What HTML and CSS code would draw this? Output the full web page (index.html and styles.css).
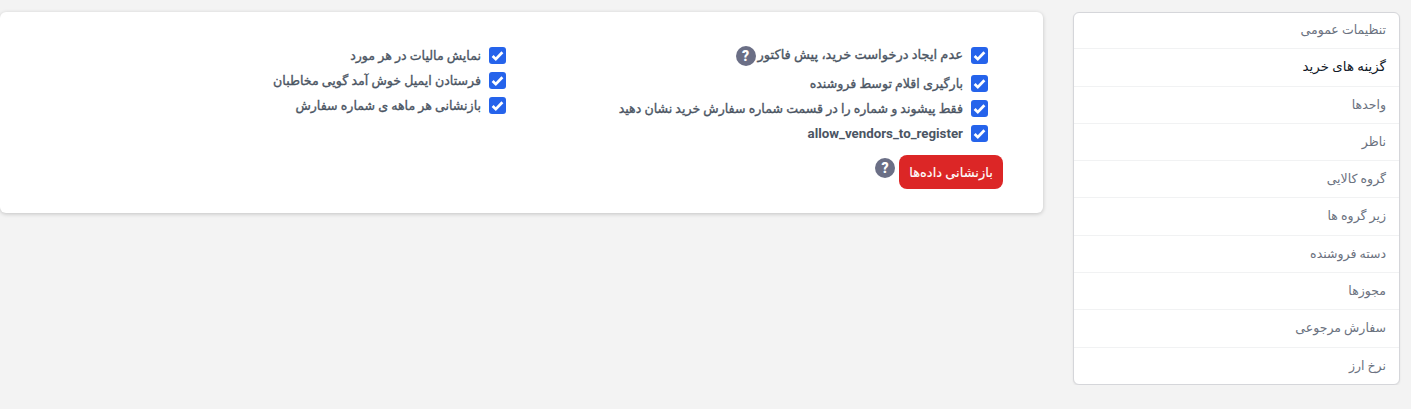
FILE: index.html
```html
<!DOCTYPE html>
<html lang="fa" dir="rtl">
<head>
<meta charset="UTF-8">
<meta name="viewport" content="width=device-width, initial-scale=1.0">
<title>تنظیمات</title>
<link rel="stylesheet" href="styles.css">
</head>
<body>

<div class="page">

  <!-- Settings menu -->
  <nav class="side-menu">
    <a class="menu-item">تنظیمات عمومی</a>
    <a class="menu-item active">گزینه های خرید</a>
    <a class="menu-item">واحدها</a>
    <a class="menu-item">ناظر</a>
    <a class="menu-item">گروه کالایی</a>
    <a class="menu-item">زیر گروه ها</a>
    <a class="menu-item">دسته فروشنده</a>
    <a class="menu-item">مجوزها</a>
    <a class="menu-item">سفارش مرجوعی</a>
    <a class="menu-item">نرخ ارز</a>
  </nav>

  <!-- Purchase options -->
  <main class="card">
    <div class="options">
      <div class="option-col">
        <label class="option option-help">
          <span class="check"><svg viewBox="0 0 16 16"><path d="M3.4 8.4l3 3 6.2-6.4"/></svg></span>
          <span class="option-text">عدم ایجاد درخواست خرید، پیش فاکتور</span>
          <span class="help help-overlap">?</span>
        </label>
        <label class="option">
          <span class="check"><svg viewBox="0 0 16 16"><path d="M3.4 8.4l3 3 6.2-6.4"/></svg></span>
          <span class="option-text">بارگیری اقلام توسط فروشنده</span>
        </label>
        <label class="option">
          <span class="check"><svg viewBox="0 0 16 16"><path d="M3.4 8.4l3 3 6.2-6.4"/></svg></span>
          <span class="option-text">فقط پیشوند و شماره را در قسمت شماره سفارش خرید نشان دهید</span>
        </label>
        <label class="option">
          <span class="check"><svg viewBox="0 0 16 16"><path d="M3.4 8.4l3 3 6.2-6.4"/></svg></span>
          <span class="option-latin">allow_vendors_to_register</span>
        </label>
        <div class="reset-row">
          <button class="reset-button">بازنشانی داده‌ها</button>
          <span class="help">?</span>
        </div>
      </div>
      <div class="option-col">
        <label class="option">
          <span class="check"><svg viewBox="0 0 16 16"><path d="M3.4 8.4l3 3 6.2-6.4"/></svg></span>
          <span class="option-text">نمایش مالیات در هر مورد</span>
        </label>
        <label class="option">
          <span class="check"><svg viewBox="0 0 16 16"><path d="M3.4 8.4l3 3 6.2-6.4"/></svg></span>
          <span class="option-text">فرستادن ایمیل خوش آمد گویی مخاطبان</span>
        </label>
        <label class="option">
          <span class="check"><svg viewBox="0 0 16 16"><path d="M3.4 8.4l3 3 6.2-6.4"/></svg></span>
          <span class="option-text">بازنشانی هر ماهه ی شماره سفارش</span>
        </label>
      </div>
    </div>
  </main>

</div>

</body>
</html>
```

FILE: styles.css
```css
/* Page */
body {
  margin: 0;
  background-color: #f3f3f3;
  font-family: "Roboto", "DejaVu Sans", sans-serif;
  font-size: 13px;
  color: #4b5563;
}

.page {
  display: flex;
  align-items: flex-start;
  gap: 30px;
  padding: 12px 11px 0 0;
}

/* Side menu */
.side-menu {
  flex: none;
  width: 325px;
  display: flex;
  flex-direction: column;
  background-color: #fff;
  border: 1px solid #d5d6da;
  border-radius: 6px;
  box-shadow: 0 1px 2px rgba(0, 0, 0, 0.08);
}

.menu-item {
  height: 36.3px;
  line-height: 36px;
  padding: 0 13px;
  border-bottom: 1px solid #f1f2f3;
  color: #6b7280;
  font-size: 12.5px;
}

.menu-item:first-child {
  height: 35.3px;
  line-height: 34px;
}

.menu-item:last-child {
  border-bottom: none;
}

.menu-item.active {
  color: #111827;
  font-size: 13.4px;
}

/* Main card */
.card {
  flex: 1;
  height: 201px;
  background-color: #fff;
  border-radius: 6px;
  box-shadow: 0 1px 4px rgba(0, 0, 0, 0.2);
}

.options {
  display: grid;
  grid-template-columns: 482px 482px;
  padding: 31px 55px 0 0;
}

.option {
  display: flex;
  align-items: center;
  gap: 8px;
  height: 25px;
}

.option-help {
  height: 28px;
  align-items: flex-start;
  padding-top: 4px;
  box-sizing: border-box;
}

/* DejaVu bold runs too wide here, so the Persian labels get a thin stroke instead */
.option-text {
  font-size: 12.6px;
  -webkit-text-stroke: 0.35px #4b5563;
}

.option-help .option-text {
  font-size: 13px;
}

.option-latin {
  font-size: 13.3px;
  font-weight: 700;
}

.check {
  flex: none;
  width: 17px;
  height: 17px;
  border-radius: 3px;
  background-color: #2563eb;
}

.check svg {
  display: block;
  width: 17px;
  height: 17px;
  fill: none;
  stroke: #fff;
  stroke-width: 2.6;
}

.help {
  flex: none;
  width: 20px;
  height: 20px;
  border-radius: 50%;
  background-color: #6b6f86;
  color: #fff;
  font-size: 14px;
  font-weight: 900;
  line-height: 20px;
  text-align: center;
}

.help-overlap {
  margin-top: -1px;
  margin-right: -6px;
}

/* Reset button */
.reset-row {
  display: flex;
  align-items: flex-start;
  gap: 4px;
  margin-top: 9px;
  margin-right: -15px;
}

.reset-button {
  width: 104px;
  height: 34px;
  padding: 0;
  border: none;
  border-radius: 8px;
  background-color: #dc2626;
  color: #fff;
  font-family: inherit;
  font-size: 13px;
  -webkit-text-stroke: 0.15px #fff;
}

.reset-row .help {
  margin-top: 3px;
}
```
